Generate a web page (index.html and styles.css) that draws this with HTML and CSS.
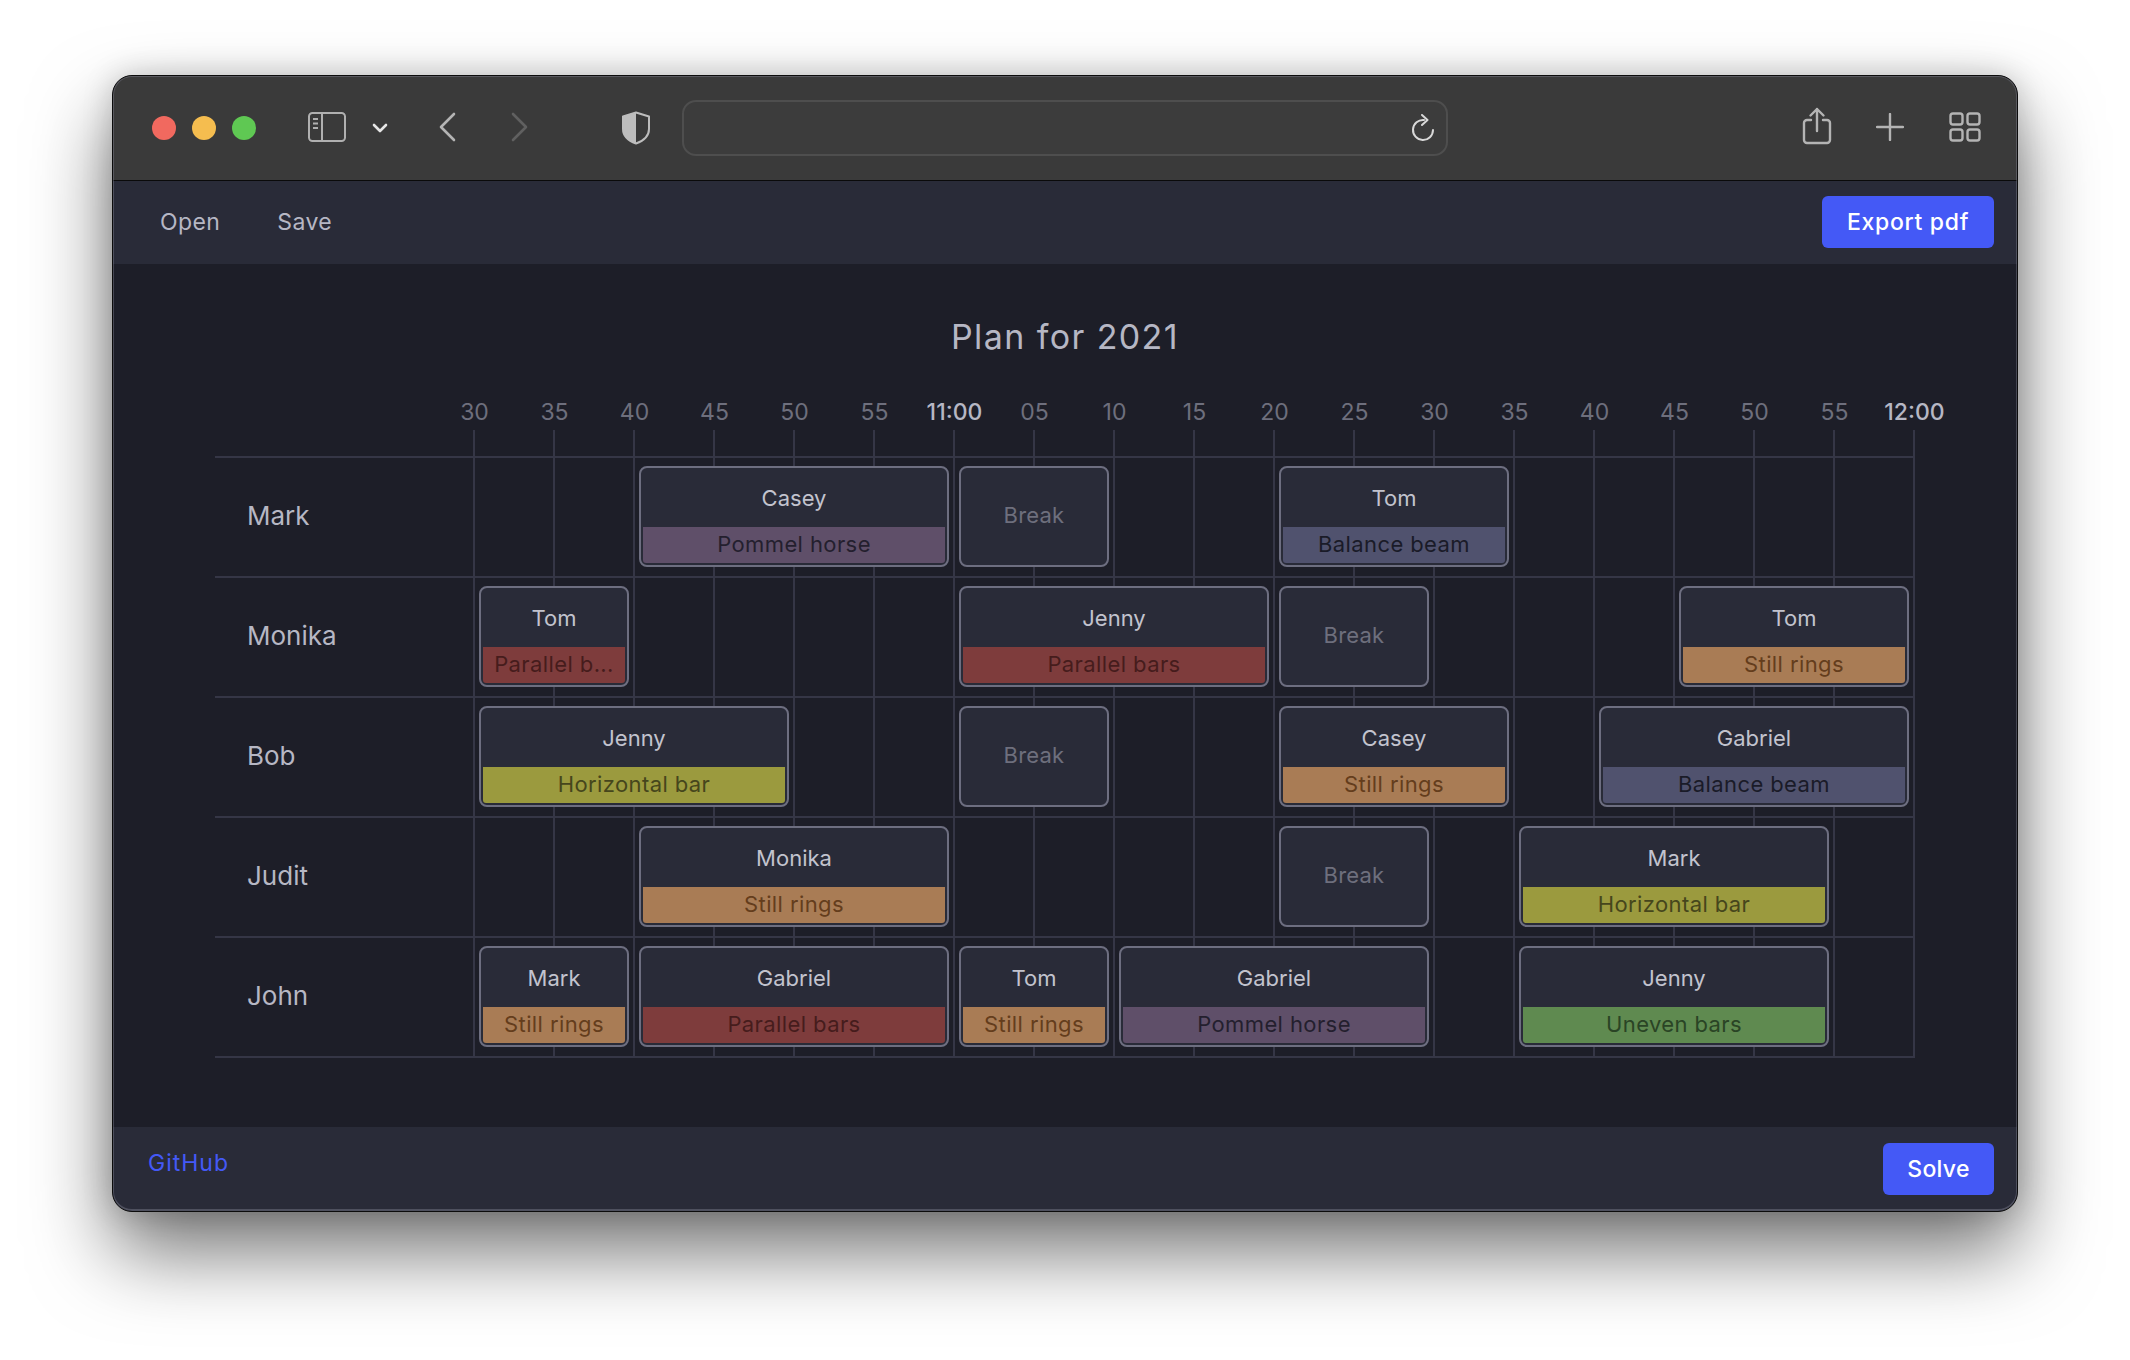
FILE: index.html
```html
<!DOCTYPE html>
<html lang="en">
<head>
<meta charset="utf-8">
<title>Plan for 2021</title>
<link rel="stylesheet" href="styles.css">
</head>
<body>
<div class="window">
  <header class="chrome">
    <div class="lights"><span class="light red"></span><span class="light yellow"></span><span class="light green"></span></div>
    <svg class="ic sidebar" width="38" height="30" viewBox="0 0 38 30"><rect x="1" y="1" width="36" height="28" rx="3.5" fill="none" stroke="#b0b0b0" stroke-width="2"/><path d="M14 1v28" stroke="#b0b0b0" stroke-width="2"/><path d="M5 7h5M5 11.5h5M5 16h5" stroke="#b0b0b0" stroke-width="2"/></svg>
    <svg class="ic chev" width="16" height="10" viewBox="0 0 16 10"><path d="M2 2l6 6 6-6" fill="none" stroke="#e6e6e6" stroke-width="2.6" stroke-linecap="round" stroke-linejoin="round"/></svg>
    <svg class="ic back" width="18" height="30" viewBox="0 0 18 30"><path d="M16 2L3 15l13 13" fill="none" stroke="#b4b4b4" stroke-width="2.6" stroke-linecap="round" stroke-linejoin="round"/></svg>
    <svg class="ic forward" width="18" height="30" viewBox="0 0 18 30"><path d="M2 2l13 13L2 28" fill="none" stroke="#606060" stroke-width="2.6" stroke-linecap="round" stroke-linejoin="round"/></svg>
    <svg class="ic shield" width="30" height="34" viewBox="0 0 30 34"><path d="M15 1.500L28 5.500V18C28 25 22 30 15 32.500 8 30 2 25 2 18V5.500Z" fill="none" stroke="#bdbdbd" stroke-width="2" stroke-linejoin="round"/><path d="M15 1.500V32.500C8 30 2 25 2 18V5.500Z" fill="#bdbdbd"/></svg>
    <div class="address">
      <svg width="24" height="28" viewBox="0 0 24 28"><path d="M13 6A10 10 0 1 0 22 16" fill="none" stroke="#d8d8d8" stroke-width="2" stroke-linecap="round"/><path d="M11 1l5.500 5-5.500 5" fill="none" stroke="#d8d8d8" stroke-width="2" stroke-linecap="round" stroke-linejoin="round"/></svg>
    </div>
    <svg class="ic share" width="30" height="38" viewBox="0 0 30 38"><path d="M9 13H5a3 3 0 0 0-3 3v17a3 3 0 0 0 3 3h20a3 3 0 0 0 3-3V16a3 3 0 0 0-3-3h-4" fill="none" stroke="#b4b4b4" stroke-width="2.400" stroke-linecap="round"/><path d="M15 24V2M8.500 8.500L15 2l6.500 6.500" fill="none" stroke="#b4b4b4" stroke-width="2.400" stroke-linecap="round" stroke-linejoin="round"/></svg>
    <svg class="ic plus" width="28" height="28" viewBox="0 0 28 28"><path d="M14 1v26M1 14h26" stroke="#b4b4b4" stroke-width="2.400" stroke-linecap="round"/></svg>
    <svg class="ic tabs" width="32" height="30" viewBox="0 0 32 30"><g fill="none" stroke="#b4b4b4" stroke-width="2.400"><rect x="1.500" y="1.500" width="12" height="11" rx="2.500"/><rect x="18.500" y="1.500" width="12" height="11" rx="2.500"/><rect x="1.500" y="17.500" width="12" height="11" rx="2.500"/><rect x="18.500" y="17.500" width="12" height="11" rx="2.500"/></g></svg>
  </header>

  <nav class="toolbar">
    <a class="tool first">Open</a>
    <a class="tool">Save</a>
    <button class="btn export">Export pdf</button>
  </nav>

  <main class="content">
    <h1 class="title">Plan for 2021</h1>
    <div class="labels">
      <span>30</span><span>35</span><span>40</span><span>45</span><span>50</span><span>55</span><span class="hour">11:00</span><span>05</span><span>10</span><span>15</span><span>20</span><span>25</span><span>30</span><span>35</span><span>40</span><span>45</span><span>50</span><span>55</span><span class="hour">12:00</span>
    </div>
    <div class="ticks"><div class="track"></div></div>
    <div class="table">
      <div class="row">
        <div class="name">Mark</div>
        <div class="track">
          <div class="event" style="grid-column:3/7"><b>Casey</b><i class="pommel">Pommel horse</i></div>
          <div class="event break" style="grid-column:7/9">Break</div>
          <div class="event" style="grid-column:11/14"><b>Tom</b><i class="beam">Balance beam</i></div>
        </div>
      </div>
      <div class="row">
        <div class="name">Monika</div>
        <div class="track">
          <div class="event" style="grid-column:1/3"><b>Tom</b><i class="parallel">Parallel b...</i></div>
          <div class="event" style="grid-column:7/11"><b>Jenny</b><i class="parallel">Parallel bars</i></div>
          <div class="event break" style="grid-column:11/13">Break</div>
          <div class="event" style="grid-column:16/19"><b>Tom</b><i class="rings">Still rings</i></div>
        </div>
      </div>
      <div class="row">
        <div class="name">Bob</div>
        <div class="track">
          <div class="event" style="grid-column:1/5"><b>Jenny</b><i class="horizontal">Horizontal bar</i></div>
          <div class="event break" style="grid-column:7/9">Break</div>
          <div class="event" style="grid-column:11/14"><b>Casey</b><i class="rings">Still rings</i></div>
          <div class="event" style="grid-column:15/19"><b>Gabriel</b><i class="beam">Balance beam</i></div>
        </div>
      </div>
      <div class="row">
        <div class="name">Judit</div>
        <div class="track">
          <div class="event" style="grid-column:3/7"><b>Monika</b><i class="rings">Still rings</i></div>
          <div class="event break" style="grid-column:11/13">Break</div>
          <div class="event" style="grid-column:14/18"><b>Mark</b><i class="horizontal">Horizontal bar</i></div>
        </div>
      </div>
      <div class="row">
        <div class="name">John</div>
        <div class="track">
          <div class="event" style="grid-column:1/3"><b>Mark</b><i class="rings">Still rings</i></div>
          <div class="event" style="grid-column:3/7"><b>Gabriel</b><i class="parallel">Parallel bars</i></div>
          <div class="event" style="grid-column:7/9"><b>Tom</b><i class="rings">Still rings</i></div>
          <div class="event" style="grid-column:9/13"><b>Gabriel</b><i class="pommel">Pommel horse</i></div>
          <div class="event" style="grid-column:14/18"><b>Jenny</b><i class="uneven">Uneven bars</i></div>
        </div>
      </div>
    </div>
  </main>

  <footer class="footer">
    <a class="github">GitHub</a>
    <button class="btn solve">Solve</button>
  </footer>
</div>
</body>
</html>
```

FILE: styles.css
```css
* { box-sizing: border-box; }
html, body { margin: 0; height: 100%; }
body {
  background: #fff;
  padding: 75px 112px 0;
  font-family: Inter, "Liberation Sans", sans-serif;
  overflow: hidden;
}
.window {
  position: relative;
  width: 1906px;
  height: 1137px;
  border-radius: 20px;
  overflow: hidden;
  display: flex;
  flex-direction: column;
  background: #1d1e28;
  border: 1px solid #0c0c0c;
  box-shadow: 0 40px 80px rgba(0,0,0,.55), 0 0 30px rgba(0,0,0,.18);
}
.window::after {
  content: "";
  position: absolute;
  inset: 0;
  border: 1px solid rgba(150,150,165,.35);
  border-bottom-width: 2px;
  border-radius: 19px;
  pointer-events: none;
}
.chrome {
  position: relative;
  height: 105px;
  flex: none;
  background: #3a3a3a;
  border-bottom: 1px solid #0a0a0a;
}
.lights { position: absolute; left: 39px; top: 40px; display: flex; gap: 16px; }
.light { width: 24px; height: 24px; border-radius: 50%; }
.red { background: #f1695f; }
.yellow { background: #f5bd4f; }
.green { background: #5fc853; }
.ic { position: absolute; display: block; }
.sidebar { left: 195px; top: 36px; }
.chev { left: 259px; top: 47px; }
.back { left: 325px; top: 36px; }
.forward { left: 398px; top: 36px; }
.shield { left: 508px; top: 35px; }
.share { left: 1689px; top: 31px; }
.plus { left: 1763px; top: 37px; }
.tabs { left: 1836px; top: 36px; }
.address {
  position: absolute;
  left: 569px;
  top: 24px;
  width: 766px;
  height: 56px;
  background: #3c3c3c;
  border: 2px solid #4e4e4e;
  border-radius: 14px;
  display: flex;
  align-items: center;
  justify-content: flex-end;
  padding-right: 11px;
}
.toolbar {
  height: 83px;
  flex: none;
  background: #292b38;
  display: flex;
  align-items: center;
  padding: 0 23px 2px 47px;
}
.tool { color: #b6b7c4; font-size: 23px; letter-spacing: .4px; margin-right: 57px; }
.btn {
  border: 0;
  border-radius: 6px;
  height: 52px;
  background: #4459f6;
  color: #fff;
  font: 500 23px Inter, "Liberation Sans", sans-serif;
}
.export { width: 172px; margin-left: auto; letter-spacing: .7px; }
.solve { width: 111px; margin-left: auto; letter-spacing: .3px; }
.content { flex: 1; display: flex; flex-direction: column; padding-left: 102px; }
.title {
  margin: 51px 0 0;
  text-align: center;
  margin-left: -102px;
  color: #b6b7c4;
  font-size: 34px;
  line-height: 44px;
  font-weight: 400;
  letter-spacing: 1.4px;
}
.labels {
  display: grid;
  grid-template-columns: repeat(19, 80px);
  margin: 39px 0 0 219.5px;
  height: 28px;
  line-height: 28px;
  text-align: center;
  color: #6e6f7d;
  font-size: 23px;
}
.hour { color: #b6b7c4; font-weight: 500; }
.ticks { height: 26px; margin: 4px 0 0 258px; flex: none; }
.track {
  width: 1442px;
  height: 100%;
  display: grid;
  grid-template-columns: repeat(18, 80px);
  grid-template-rows: 1fr;
  background: linear-gradient(to right, #353646 2px, transparent 2px) 0 0 / 80px 100%;
}
.table { width: 1700px; border-top: 2px solid #353646; }
.row {
  height: 120px;
  display: flex;
  border-bottom: 2px solid #353646;
}
.name {
  width: 258px;
  flex: none;
  padding: 0 0 3px 32px;
  display: flex;
  align-items: center;
  color: #b6b7c4;
  font-size: 26px;
}
.event {
  margin: 8px 4px 9px 6px;
  min-width: 0;
  display: flex;
  flex-direction: column;
  background: #292b38;
  border: 2px solid #6d6e80;
  border-radius: 8px;
  padding: 0 2px 2px;
  text-align: center;
  color: #c2c3ce;
  font-size: 22px;
}
.event b {
  flex: 1;
  display: flex;
  align-items: center;
  justify-content: center;
  padding-top: 1px;
  font-weight: 400;
}
.event i {
  height: 36px;
  line-height: 35px;
  font-style: normal;
  white-space: nowrap;
  overflow: hidden;
  letter-spacing: .4px;
  border-radius: 0 0 3px 3px;
}
.break {
  justify-content: center;
  color: #6e6f7d;
  padding-bottom: 4px;
  letter-spacing: .2px;
}
.pommel { background: #5f4f69; color: #241f2e; }
.beam { background: #50526e; color: #1a1b28; }
.parallel { background: #7e3c3c; color: #461c1c; }
.rings { background: #a97c55; color: #643d1c; }
.horizontal { background: #9b9a3e; color: #46461c; }
.uneven { background: #5f8a50; color: #2a4425; }
.footer {
  height: 84px;
  flex: none;
  background: #292b38;
  display: flex;
  align-items: flex-start;
  padding: 16px 23px 0 35px;
}
.github { color: #4459f6; font-size: 23px; line-height: 40px; letter-spacing: 1px; }
```
